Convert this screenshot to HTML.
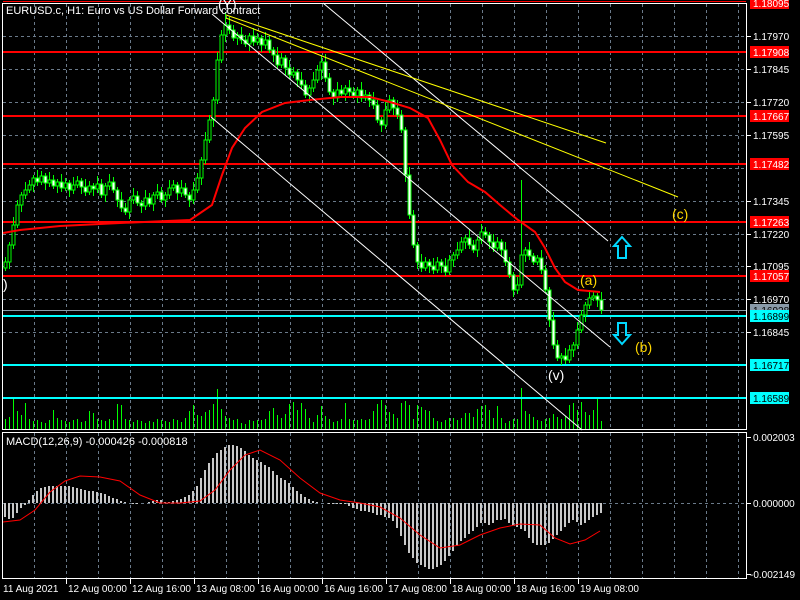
<!DOCTYPE html>
<html><head><meta charset="utf-8">
<style>
html,body{margin:0;padding:0;background:#000;width:800px;height:600px;overflow:hidden}
svg{display:block}
text{font-family:"Liberation Sans","DejaVu Sans",sans-serif}
</style></head>
<body>
<svg width="800" height="600" xmlns="http://www.w3.org/2000/svg">
<rect width="800" height="600" fill="#000"/>
<!-- grid -->
<g stroke="#6a7a8a" stroke-dasharray="3,3" stroke-width="1">
<path d="M34.5 4V429M66.5 4V429M98.5 4V429M130.5 4V429M162.5 4V429M194.5 4V429M226.5 4V429M258.5 4V429M290.5 4V429M322.5 4V429M354.5 4V429M386.5 4V429M418.5 4V429M450.5 4V429M482.5 4V429M514.5 4V429M546.5 4V429M578.5 4V429M610.5 4V429M642.5 4V429M674.5 4V429M706.5 4V429M738.5 4V429"/>
<path d="M34.5 433V578M66.5 433V578M98.5 433V578M130.5 433V578M162.5 433V578M194.5 433V578M226.5 433V578M258.5 433V578M290.5 433V578M322.5 433V578M354.5 433V578M386.5 433V578M418.5 433V578M450.5 433V578M482.5 433V578M514.5 433V578M546.5 433V578M578.5 433V578M610.5 433V578M642.5 433V578M674.5 433V578M706.5 433V578M738.5 433V578"/>
<path d="M3 36.5H746M3 69.5H746M3 102.5H746M3 135.5H746M3 168.5H746M3 201.5H746M3 234.5H746M3 266.5H746M3 299.5H746M3 332.5H746M3 365.5H746M3 398.5H746M3 503.5H746"/>
</g>
<!-- volume -->
<path stroke="#00ff00" stroke-width="1.2" shape-rendering="crispEdges" fill="none" d="M5.5 429V419M9.5 429V417M13.5 429V399M17.5 429V411M21.5 429V415M25.5 429V403M29.5 429V419M33.5 429V421M37.5 429V420M41.5 429V422M45.5 429V423M49.5 429V420M53.5 429V410M57.5 429V418M61.5 429V420M65.5 429V421M69.5 429V422M73.5 429V420M77.5 429V419M81.5 429V422M85.5 429V421M89.5 429V411M93.5 429V413M97.5 429V419M101.5 429V420M105.5 429V421M109.5 429V419M113.5 429V420M117.5 429V404M121.5 429V405M125.5 429V419M129.5 429V420M133.5 429V422M137.5 429V420M141.5 429V421M145.5 429V423M149.5 429V421M153.5 429V422M157.5 429V419M161.5 429V420M165.5 429V421M169.5 429V422M173.5 429V419M177.5 429V420M181.5 429V422M185.5 429V418M189.5 429V411M193.5 429V405M197.5 429V415M201.5 429V416M205.5 429V412M209.5 429V410M213.5 429V404M217.5 429V389M221.5 429V409M225.5 429V416M229.5 429V418M233.5 429V420M237.5 429V419M241.5 429V423M245.5 429V424M249.5 429V420M253.5 429V421M257.5 429V420M261.5 429V420M265.5 429V419M269.5 429V411M273.5 429V408M277.5 429V415M281.5 429V418M285.5 429V414M289.5 429V404M293.5 429V402M297.5 429V410M301.5 429V403M305.5 429V409M309.5 429V418M313.5 429V422M317.5 429V415M321.5 429V406M325.5 429V416M329.5 429V419M333.5 429V422M337.5 429V421M341.5 429V419M345.5 429V403M349.5 429V419M353.5 429V420M357.5 429V420M361.5 429V419M365.5 429V420M369.5 429V419M373.5 429V411M377.5 429V404M381.5 429V400M385.5 429V405M389.5 429V412M393.5 429V414M397.5 429V418M401.5 429V403M405.5 429V401M409.5 429V405M413.5 429V419M417.5 429V405M421.5 429V407M425.5 429V410M429.5 429V411M433.5 429V418M437.5 429V421M441.5 429V422M445.5 429V420M449.5 429V418M453.5 429V418M457.5 429V420M461.5 429V418M465.5 429V413M469.5 429V413M473.5 429V417M477.5 429V409M481.5 429V406M485.5 429V405M489.5 429V410M493.5 429V418M497.5 429V406M501.5 429V418M505.5 429V423M509.5 429V421M513.5 429V419M517.5 429V419M521.5 429V388M525.5 429V411M529.5 429V414M533.5 429V417M537.5 429V420M541.5 429V421M545.5 429V419M549.5 429V418M553.5 429V414M557.5 429V417M561.5 429V419M565.5 429V416M569.5 429V405M573.5 429V403M577.5 429V410M581.5 429V402M585.5 429V412M589.5 429V415M593.5 429V410M597.5 429V399M601.5 429V421"/>
<!-- horizontal levels -->
<g>
<line x1="3" y1="1.5" x2="746" y2="1.5" stroke="#ff0000" stroke-width="1"/>
<line x1="3" y1="52" x2="746" y2="52" stroke="#ff0000" stroke-width="2"/>
<line x1="3" y1="116" x2="746" y2="116" stroke="#ff0000" stroke-width="2"/>
<line x1="3" y1="164" x2="746" y2="164" stroke="#ff0000" stroke-width="2"/>
<line x1="3" y1="222" x2="746" y2="222" stroke="#ff0000" stroke-width="2"/>
<line x1="3" y1="276" x2="746" y2="276" stroke="#ff0000" stroke-width="2"/>
<line x1="3" y1="310.5" x2="746" y2="310.5" stroke="#8a9aa8" stroke-width="1"/>
<line x1="3" y1="316" x2="746" y2="316" stroke="#00ffff" stroke-width="2"/>
<line x1="3" y1="365" x2="746" y2="365" stroke="#00ffff" stroke-width="2"/>
<line x1="3" y1="398" x2="746" y2="398" stroke="#00ffff" stroke-width="2"/>
</g>
<!-- candles wicks -->
<path stroke="#00ff00" stroke-width="1" shape-rendering="crispEdges" fill="none" d="M5.5 257V271M9.5 242V269M13.5 217V249M17.5 200V228M21.5 192V212M25.5 182V199M29.5 180V193M33.5 175V192M37.5 170V186M41.5 171V185M45.5 173V190M49.5 172V187M53.5 175V189M57.5 179V193M61.5 174V192M65.5 178V191M69.5 180V197M73.5 177V194M77.5 176V188M81.5 178V194M85.5 179V196M89.5 181V195M93.5 183V196M97.5 176V193M101.5 179V198M105.5 183V202M109.5 174V190M113.5 177V193M117.5 187V207M121.5 192V212M125.5 203V215M129.5 197V219M133.5 188V204M137.5 191V206M141.5 200V213M145.5 190V210M149.5 193V207M153.5 192V211M157.5 184V199M161.5 187V203M165.5 192V207M169.5 180V199M173.5 180V191M177.5 182V200M181.5 180V197M185.5 183V198M189.5 192V207M193.5 182V204M197.5 173V193M201.5 157V185M205.5 132V164M209.5 115V143M213.5 97V127M217.5 52V104M221.5 30V63M225.5 12V42M229.5 17V34M233.5 25V41M237.5 32V45M241.5 27V44M245.5 35V47M249.5 33V51M253.5 28V46M257.5 33V45M261.5 35V52M265.5 32V49M269.5 35V53M273.5 47V62M277.5 47V69M281.5 53V68M285.5 55V75M289.5 60V79M293.5 67V78M297.5 69V87M301.5 72V89M305.5 80V98M309.5 85V102M313.5 72V92M317.5 65V83M321.5 55V80M325.5 54V82M329.5 73V95M333.5 89V105M337.5 82V102M341.5 85V97M345.5 85V101M349.5 80V96M353.5 87V99M357.5 87V103M361.5 82V102M365.5 90V101M369.5 92V107M373.5 92V109M377.5 100V123M381.5 117V132M385.5 102V129M389.5 95V113M393.5 97V115M397.5 100V119M401.5 110V133M405.5 127V182M409.5 167V219M413.5 210V248M417.5 242V269M421.5 254V272M425.5 257V271M429.5 259V273M433.5 258V274M437.5 257V273M441.5 259V273M445.5 258V276M449.5 255V275M453.5 252V267M457.5 242V259M461.5 237V253M465.5 235V249M469.5 230V249M473.5 240V253M477.5 237V257M481.5 224V244M485.5 227V238M489.5 232V249M493.5 234V252M497.5 237V251M501.5 239V257M505.5 242V266M509.5 257V278M513.5 272V297M517.5 277V294M521.5 180V288M525.5 247V262M529.5 242V260M533.5 253V265M537.5 255V265M541.5 250V274M545.5 265V293M549.5 287V327M553.5 312V349M557.5 340V361M561.5 353V365M565.5 348V364M569.5 345V363M573.5 342V357M577.5 322V349M581.5 310V333M585.5 302V322M589.5 290V309M593.5 291V301M597.5 293V307M601.5 292V314"/>
<!-- bodies rising (black) -->
<path stroke="#00ff00" stroke-width="1" fill="#000" d="M4 262h3v6h-3zM8 245h3v17h-3zM12 225h3v20h-3zM16 205h3v20h-3zM20 195h3v10h-3zM24 190h3v5h-3zM28 185h3v5h-3zM32 178h3v7h-3zM40 176h3v6h-3zM48 180h3v3h-3zM56 182h3v4h-3zM64 183h3v5h-3zM72 185h3v5h-3zM76 181h3v4h-3zM88 186h3v6h-3zM96 184h3v5h-3zM104 186h3v9h-3zM108 182h3v4h-3zM128 200h3v12h-3zM132 196h3v4h-3zM144 198h3v8h-3zM152 195h3v9h-3zM156 192h3v3h-3zM164 195h3v5h-3zM168 188h3v7h-3zM172 185h3v3h-3zM180 188h3v5h-3zM192 190h3v10h-3zM196 178h3v12h-3zM200 160h3v18h-3zM204 140h3v20h-3zM208 120h3v20h-3zM212 100h3v20h-3zM216 60h3v40h-3zM220 35h3v25h-3zM224 25h3v10h-3zM236 35h3v3h-3zM248 36h3v8h-3zM256 38h3v4h-3zM264 40h3v5h-3zM280 58h3v7h-3zM292 72h3v3h-3zM308 88h3v7h-3zM312 80h3v8h-3zM316 70h3v10h-3zM320 62h3v8h-3zM336 90h3v8h-3zM344 88h3v6h-3zM356 90h3v6h-3zM364 95h3v3h-3zM384 110h3v15h-3zM388 100h3v10h-3zM424 262h3v6h-3zM436 262h3v8h-3zM448 260h3v12h-3zM452 255h3v5h-3zM456 250h3v5h-3zM460 242h3v8h-3zM464 238h3v4h-3zM476 240h3v10h-3zM480 232h3v8h-3zM496 242h3v6h-3zM516 285h3v5h-3zM520 255h3v30h-3zM524 250h3v5h-3zM536 258h3v4h-3zM560 356h3v2h-3zM568 350h3v10h-3zM572 345h3v5h-3zM576 330h3v15h-3zM580 315h3v15h-3zM584 305h3v10h-3zM588 298h3v7h-3zM592 296h3v2h-3z"/>
<!-- bodies falling (white) -->
<path stroke="#00ff00" stroke-width="1" fill="#fff" d="M36 178h3v4h-3zM44 176h3v7h-3zM52 180h3v6h-3zM60 182h3v6h-3zM68 183h3v7h-3zM80 181h3v6h-3zM84 187h3v5h-3zM92 186h3v3h-3zM100 184h3v11h-3zM112 182h3v8h-3zM116 190h3v10h-3zM120 200h3v8h-3zM124 208h3v4h-3zM136 196h3v7h-3zM140 203h3v3h-3zM148 198h3v6h-3zM160 192h3v8h-3zM176 185h3v8h-3zM184 188h3v7h-3zM188 195h3v5h-3zM228 25h3v5h-3zM232 30h3v8h-3zM240 35h3v5h-3zM244 40h3v4h-3zM252 36h3v6h-3zM260 38h3v7h-3zM268 40h3v10h-3zM272 50h3v5h-3zM276 55h3v10h-3zM284 58h3v10h-3zM288 68h3v7h-3zM296 72h3v8h-3zM300 80h3v5h-3zM304 85h3v10h-3zM324 62h3v16h-3zM328 78h3v14h-3zM332 92h3v6h-3zM340 90h3v4h-3zM348 88h3v4h-3zM352 92h3v4h-3zM360 90h3v8h-3zM368 95h3v5h-3zM372 100h3v5h-3zM376 105h3v15h-3zM380 120h3v5h-3zM392 100h3v8h-3zM396 108h3v7h-3zM400 115h3v15h-3zM404 130h3v45h-3zM408 175h3v40h-3zM412 215h3v30h-3zM416 245h3v17h-3zM420 262h3v6h-3zM428 262h3v4h-3zM432 266h3v4h-3zM440 262h3v4h-3zM444 266h3v6h-3zM468 238h3v7h-3zM472 245h3v5h-3zM484 232h3v3h-3zM488 235h3v7h-3zM492 242h3v6h-3zM500 242h3v8h-3zM504 250h3v12h-3zM508 262h3v13h-3zM512 275h3v15h-3zM528 250h3v6h-3zM532 256h3v6h-3zM540 258h3v12h-3zM544 270h3v20h-3zM548 290h3v30h-3zM552 320h3v25h-3zM556 345h3v13h-3zM564 356h3v4h-3zM596 296h3v4h-3zM600 300h3v10h-3z"/>
<!-- MA -->
<polyline points="3,233 20,230 60,226 120,223 190,220 212,205 222,175 232,148 245,128 262,112 285,103 310,100 340,97 370,97 390,102 410,108 428,118 440,140 452,165 468,182 485,192 500,205 518,220 535,232 545,248 555,268 565,282 578,290 600,292" fill="none" stroke="#ff0000" stroke-width="2"/>
<!-- channel lines -->
<line x1="323" y1="3" x2="608" y2="241" stroke="#fff"/>
<line x1="212" y1="14" x2="610" y2="347" stroke="#fff"/>
<line x1="211" y1="117" x2="582" y2="430" stroke="#fff"/>
<line x1="226" y1="15" x2="606" y2="143" stroke="#ffff00"/>
<line x1="226" y1="18" x2="678" y2="197" stroke="#ffff00"/>
<!-- arrows -->
<path d="M622,237 L630,246 L626,246 L626,258 L618,258 L618,246 L614,246 Z" fill="none" stroke="#00d8ff" stroke-width="2"/>
<path d="M622,344 L630,335 L626,335 L626,323 L618,323 L618,335 L614,335 Z" fill="none" stroke="#00d8ff" stroke-width="2"/>
<!-- labels -->
<text x="672" y="219" fill="#ffd700" font-size="14">(c)</text>
<text x="580" y="285" fill="#ffd700" font-size="14">(a)</text>
<text x="635" y="352" fill="#ffd700" font-size="14">(b)</text>
<text x="548" y="380" fill="#fff" font-size="14">(v)</text>
<text x="218" y="9" fill="#fff" font-size="14">(Y)</text>
<text x="3" y="289" fill="#fff" font-size="14">)</text>
<text x="6" y="14" fill="#fff" font-size="11">EURUSD.c, H1:  Euro vs US Dollar Forward contract</text>
<!-- MACD histogram -->
<path stroke="#c8c8c8" stroke-width="2" shape-rendering="crispEdges" fill="none" d="M5 503V517M9 503V519M13 503V518M17 503V513M21 503V508M25 503V505M29 503V500M33 503V495M37 503V491M41 503V488M45 503V487M49 503V486M53 503V486M57 503V486M61 503V486M65 503V486M69 503V486M73 503V487M77 503V488M81 503V489M85 503V490M89 503V491M93 503V491M97 503V492M101 503V493M105 503V494M109 503V496M113 503V498M117 503V499M121 503V501M125 503V502M133 503V504M137 503V504M149 503V502M153 503V501M157 503V500M161 503V500M165 503V502M169 503V502M173 503V501M177 503V500M181 503V499M185 503V497M189 503V495M193 503V491M197 503V486M201 503V478M205 503V470M209 503V463M213 503V458M217 503V453M221 503V450M225 503V447M229 503V445M233 503V445M237 503V446M241 503V448M245 503V451M249 503V455M253 503V458M257 503V460M261 503V462M265 503V465M269 503V467M273 503V471M277 503V475M281 503V478M285 503V480M289 503V483M293 503V487M297 503V491M301 503V494M305 503V497M309 503V499M313 503V501M317 503V502M329 503V504M333 503V504M337 503V504M341 503V504M345 503V504M349 503V506M353 503V508M357 503V509M361 503V511M365 503V511M369 503V512M373 503V513M377 503V515M381 503V515M385 503V517M389 503V518M393 503V521M397 503V528M401 503V536M405 503V545M409 503V553M413 503V558M417 503V563M421 503V565M425 503V567M429 503V569M433 503V569M437 503V567M441 503V565M445 503V561M449 503V556M453 503V551M457 503V546M461 503V541M465 503V538M469 503V534M473 503V531M477 503V527M481 503V523M485 503V523M489 503V525M493 503V523M497 503V520M501 503V520M505 503V519M509 503V523M513 503V525M517 503V527M521 503V529M525 503V531M529 503V538M533 503V543M537 503V545M541 503V545M545 503V545M549 503V543M553 503V539M557 503V535M561 503V531M565 503V527M569 503V523M573 503V520M577 503V522M581 503V525M585 503V523M589 503V520M593 503V517M597 503V515M601 503V513"/>
<polyline points="3,522 20,520 35,510 50,492 65,481 80,476 100,477 120,481 140,495 160,503 180,503 200,501 215,490 230,470 245,455 260,450 280,460 300,478 320,493 340,500 360,503 380,507 400,518 420,535 440,548 460,545 480,535 500,528 520,524 540,525 555,538 570,544 585,540 600,531" fill="none" stroke="#ff0000" stroke-width="1"/>
<text x="6" y="445" fill="#fff" font-size="11">MACD(12,26,9) -0.000426 -0.000818</text>
<!-- borders -->
<rect x="2.5" y="3.5" width="744" height="426" fill="none" stroke="#fff"/>
<rect x="2.5" y="432.5" width="744" height="146" fill="none" stroke="#fff"/>
<!-- right axis -->
<g fill="#fff" font-size="10">
<path stroke="#fff" d="M747 36.5H751M747 69.5H751M747 102.5H751M747 135.5H751M747 201.5H751M747 234.5H751M747 266.5H751M747 299.5H751M747 332.5H751M747 437.5H751M747 503.5H751M747 574.5H751"/>
<text x="753" y="40">1.17970</text>
<text x="753" y="73">1.17845</text>
<text x="753" y="106">1.17720</text>
<text x="753" y="139">1.17595</text>
<text x="753" y="205">1.17345</text>
<text x="753" y="238">1.17220</text>
<text x="753" y="270">1.17095</text>
<text x="753" y="303">1.16970</text>
<text x="753" y="336">1.16845</text>
<text x="753" y="441">0.002003</text>
<text x="753" y="507">0.000000</text>
<text x="750" y="578">-0.002149</text>
</g>
<g font-size="10">
<rect x="750" y="-3" width="39" height="12" fill="#ff0000"/><text x="753" y="7" fill="#fff">1.18095</text>
<rect x="750" y="46" width="39" height="12" fill="#ff0000"/><text x="753" y="56" fill="#fff">1.17908</text>
<rect x="750" y="110" width="39" height="12" fill="#ff0000"/><text x="753" y="120" fill="#fff">1.17667</text>
<rect x="750" y="158" width="39" height="12" fill="#ff0000"/><text x="753" y="168" fill="#fff">1.17482</text>
<rect x="750" y="216" width="39" height="12" fill="#ff0000"/><text x="753" y="226" fill="#fff">1.17263</text>
<rect x="750" y="270" width="39" height="12" fill="#ff0000"/><text x="753" y="280" fill="#fff">1.17057</text>
<rect x="750" y="304" width="39" height="12" fill="#8a9aa8"/><text x="753" y="314" fill="#000">1.16928</text>
<rect x="750" y="310" width="39" height="12" fill="#00ffff"/><text x="753" y="320" fill="#000">1.16899</text>
<rect x="750" y="359" width="39" height="12" fill="#00ffff"/><text x="753" y="369" fill="#000">1.16717</text>
<rect x="750" y="392" width="39" height="12" fill="#00ffff"/><text x="753" y="402" fill="#000">1.16589</text>
</g>
<!-- time axis -->
<path stroke="#fff" d="M66.5 579V584M130.5 579V584M194.5 579V584M258.5 579V584M322.5 579V584M386.5 579V584M450.5 579V584M514.5 579V584M578.5 579V584"/>
<g fill="#fff" font-size="10">
<text x="3" y="592">11 Aug 2021</text>
<text x="68" y="592">12 Aug 00:00</text>
<text x="132" y="592">12 Aug 16:00</text>
<text x="196" y="592">13 Aug 08:00</text>
<text x="260" y="592">16 Aug 00:00</text>
<text x="324" y="592">16 Aug 16:00</text>
<text x="388" y="592">17 Aug 08:00</text>
<text x="452" y="592">18 Aug 00:00</text>
<text x="516" y="592">18 Aug 16:00</text>
<text x="580" y="592">19 Aug 08:00</text>
</g>
</svg>
</body></html>
